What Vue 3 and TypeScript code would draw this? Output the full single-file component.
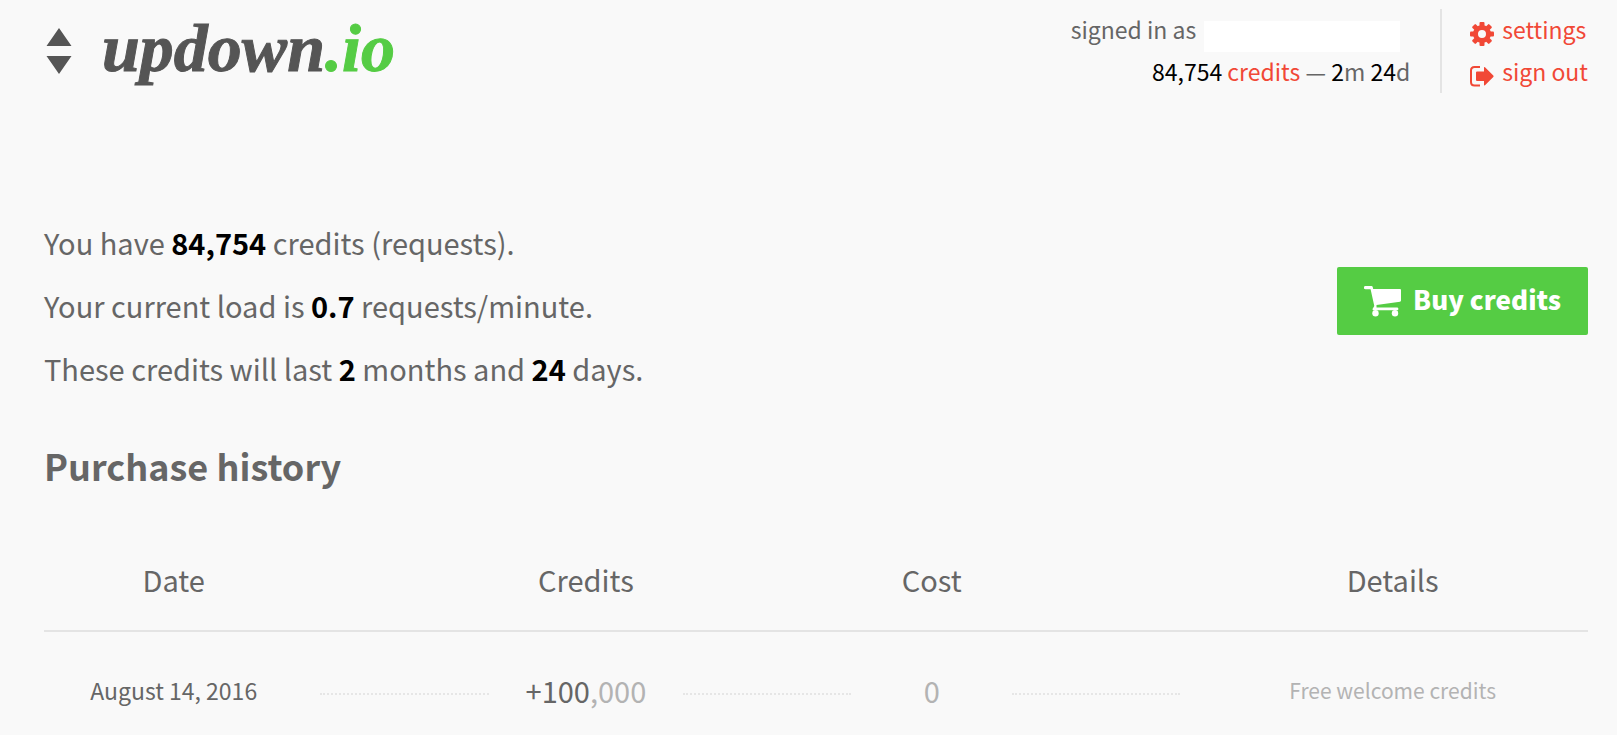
<script setup lang="ts">
interface Purchase {
  date: string
  thousands: string
  rest: string
  cost: string
  details: string
}

const purchases: Purchase[] = [
  { date: 'August 14, 2016', thousands: '+100', rest: ',000', cost: '0', details: 'Free welcome credits' },
]
const teeth = [0, 45, 90, 135, 180, 225, 270, 315]
</script>

<template>
  <div class="page">
    <header class="top">
      <a class="brand" href="#">
        <svg class="brand-icon" viewBox="0 0 26 48" aria-hidden="true">
          <path d="M13 1 25.500 19H.5zM.5 29h25L13 47z" fill="#555" />
        </svg>
        <span class="brand-name">updown<span class="tld">.io</span></span>
      </a>
      <div class="account">
        <div class="status">
          <div class="line"><span>signed in as</span><span class="user"></span></div>
          <div class="line">
            <span><b>84,754</b> <a href="#">credits</a> — <b>2</b>m <b>24</b>d</span>
          </div>
        </div>
        <nav class="links">
          <a class="line" href="#">
            <svg class="icon" viewBox="0 0 24 24" aria-hidden="true">
              <g fill="currentColor">
                <rect v-for="a in teeth" :key="a" x="9.500" y="0" width="5" height="6" rx="1" :transform="`rotate(${a} 12 12)`" />
              </g>
              <circle cx="12" cy="12" r="6.500" fill="none" stroke="currentColor" stroke-width="5" />
            </svg>
            <span>settings</span>
          </a>
          <a class="line" href="#">
            <svg class="icon" viewBox="0 0 24 24" aria-hidden="true">
              <path d="M10 3H4.500Q1 3 1 6.500V18q0 3.500 3.500 3.500H10" fill="none" stroke="currentColor" stroke-width="2" />
              <path d="M6 8.500q0-1 1-1h7V3.800q0-1.300 1-.5l8.300 8.200q.7.800 0 1.600L15 21.300q-1 .8-1-.5V17H7q-1 0-1-1z" fill="currentColor" />
            </svg>
            <span>sign out</span>
          </a>
        </nav>
      </div>
    </header>

    <main>
      <section class="summary">
        <div>
          <p>You have <strong>84,754</strong> credits (requests).</p>
          <p>Your current load is <strong>0.7</strong> requests/minute.</p>
          <p>These credits will last <strong>2</strong> months and <strong>24</strong> days.</p>
        </div>
        <button class="buy" type="button">
          <svg class="cart" viewBox="0 0 37 31" aria-hidden="true">
            <g fill="currentColor">
              <path d="M1.500 0H7.500q1 0 1.300 1.200L9.200 3H36q1 0 1 1v10.500q0 1-1 1.200L12.500 19v2.500H33a1.400 1.400 0 0 1 0 2.800H9.500q-1 0-1-1.400L10.300 20 6.600 3.300H1.500A1.600 1.600 0 0 1 1.500 0z" />
              <circle cx="11.500" cy="27.300" r="3.200" />
              <circle cx="31" cy="27.300" r="3.200" />
            </g>
          </svg>
          <span>Buy credits</span>
        </button>
      </section>

      <h2>Purchase history</h2>
      <table>
        <colgroup>
          <col class="c-date" /><col class="c-gap" /><col class="c-credits" /><col class="c-gap" />
          <col class="c-cost" /><col class="c-gap" /><col />
        </colgroup>
        <thead>
          <tr>
            <th scope="col">Date</th><td></td>
            <th scope="col">Credits</th><td></td>
            <th scope="col">Cost</th><td></td>
            <th scope="col">Details</th>
          </tr>
        </thead>
        <tbody>
          <tr v-for="p in purchases" :key="p.date">
            <td class="date">{{ p.date }}</td>
            <td class="gap"><div class="dots"></div></td>
            <td>{{ p.thousands }}<span class="muted">{{ p.rest }}</span></td>
            <td class="gap"><div class="dots"></div></td>
            <td class="muted">{{ p.cost }}</td>
            <td class="gap"><div class="dots"></div></td>
            <td class="details muted">{{ p.details }}</td>
          </tr>
        </tbody>
      </table>
    </main>
  </div>
</template>

<style>
body {
  margin: 0;
  background: #f9f9f9;
}
</style>

<style scoped>
.page {
  padding: 9px 29px 0 44px;
  color: #666;
  font-family: "Noto Sans CJK SC", "Noto Sans", sans-serif;
  font-size: 29px;
}
a {
  color: #f14836;
  text-decoration: none;
}
.top {
  display: flex;
  justify-content: space-between;
  align-items: flex-start;
}
.brand {
  display: flex;
  align-items: center;
  gap: 30px;
  color: #555;
  padding-left: 2px;
}
.brand-icon {
  width: 26px;
  height: 48px;
}
.brand-name {
  padding-bottom: 6px;
  font: italic bold 68px/78px "Liberation Serif", serif;
  -webkit-text-stroke: 1px currentColor;
}
.tld {
  color: #5c4;
}
.account {
  display: flex;
  font-size: 23px;
}
.line {
  display: flex;
  box-sizing: border-box;
  align-items: center;
  justify-content: flex-end;
  height: 42px;
  padding-bottom: 1px;
  line-height: 41px;
  white-space: nowrap;
}
.status {
  padding-right: 30px;
}
.status b {
  font-weight: 400;
  color: #000;
}
.user {
  width: 196px;
  height: 31px;
  margin: 13px 10px 0 8px;
  background: #fff;
}
.links {
  padding-left: 28px;
  border-left: 2px solid #e4e4e4;
}
.links .line {
  justify-content: flex-start;
  gap: 8px;
}
.icon {
  width: 24px;
  height: 24px;
  margin-top: 9px;
}
.summary {
  display: flex;
  align-items: flex-start;
  justify-content: space-between;
  margin-top: 128px;
}
p {
  margin: 0 0 21px;
  line-height: 42px;
}
strong {
  color: #000;
  font-weight: 700;
}
.buy {
  display: flex;
  align-items: center;
  gap: 12px;
  height: 68px;
  margin-top: 46px;
  padding: 0 27px;
  border: 0;
  border-radius: 2px;
  background: #5c4;
  color: #fff;
  font: 900 26px/60px "Noto Sans CJK SC", "Noto Sans", sans-serif;
}
.buy span {
  padding-bottom: 4px;
}
.cart {
  width: 37px;
  height: 31px;
}
h2 {
  margin: 25px 0 0;
  font-size: 36px;
  line-height: 60px;
  font-weight: 700;
}
table {
  width: 100%;
  margin-top: 32px;
  table-layout: fixed;
  border-collapse: collapse;
  text-align: center;
}
.c-date { width: 16.8%; }
.c-gap { width: 13.1%; }
.c-credits { width: 10.4%; }
.c-cost { width: 8.2%; }
th, td {
  padding: 0;
  font-weight: 400;
}
thead tr {
  border-bottom: 2px solid #e4e4e4;
}
thead th {
  height: 103px;
}
tbody td {
  height: 108px;
  line-height: 42px;
}
tbody .gap {
  padding: 8px 17px 0;
}
.dots {
  border-top: 2px dotted #e6e6e6;
}
.date {
  font-size: 23px;
}
.details {
  font-size: 21px;
}
.muted {
  color: #b3b3b3;
}
</style>
